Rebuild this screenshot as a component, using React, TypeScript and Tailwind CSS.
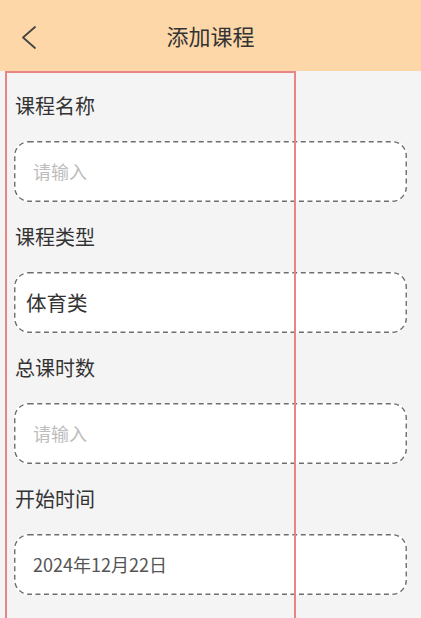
const font = { fontFamily: '"Noto Sans CJK SC", "Noto Sans", sans-serif' };

interface FieldProps {
  label: string;
  value?: string;
  valueClass?: string;
}

// dashed outline drawn as svg so the dash length matches the app's style
function DashedFrame() {
  return (
    <svg className="absolute inset-0 w-full h-full pointer-events-none" preserveAspectRatio="none">
      <rect
        x="0.75"
        y="0.75"
        width="calc(100% - 1.5px)"
        height="calc(100% - 1.5px)"
        rx="14"
        fill="none"
        stroke="#6e6e6e"
        strokeWidth="1.4"
        strokeDasharray="5 3.5"
        style={{ width: "calc(100% - 1.5px)", height: "calc(100% - 1.5px)" }}
      />
    </svg>
  );
}

function Field({ label, value, valueClass }: FieldProps) {
  return (
    <div className="flex flex-col">
      <div className="h-[70px] flex items-center pl-[15px] text-[20px] leading-none text-[#333]">{label}</div>
      <div className="relative mx-[14px] h-[61px] flex items-center rounded-[14px] bg-white">
        <DashedFrame />
        {value ? (
          <span className={valueClass}>{value}</span>
        ) : (
          <span className="pl-[19px] text-[18px] text-[#bdbdbd]">请输入</span>
        )}
      </div>
    </div>
  );
}

export default function App() {
  return (
    <div style={font} className="relative w-[421px] h-[618px] overflow-hidden bg-[#f4f4f4]">
      <header className="relative h-[71px] flex items-center justify-center bg-[#fdd7a8]">
        <svg className="absolute left-[20px] top-[25px]" width="18" height="26" viewBox="0 0 18 26" fill="none">
          <polyline points="15,2 3,12.5 15,23" stroke="#444" strokeWidth="1.8" strokeLinecap="round" strokeLinejoin="round" />
        </svg>
        <h1 className="text-[22px] text-[#333] font-normal">添加课程</h1>
      </header>
      <main className="flex flex-col">
        <Field label="课程名称" />
        <Field label="课程类型" value="体育类" valueClass="pl-[12px] text-[20.5px] text-[#333]" />
        <Field label="总课时数" />
        <Field label="开始时间" value="2024年12月22日" valueClass="pl-[19px] text-[18px] text-[#555]" />
      </main>
      <div className="absolute left-[5px] top-[71px] w-[291px] h-[600px] border-2 border-[#e98585] pointer-events-none" />
    </div>
  );
}
